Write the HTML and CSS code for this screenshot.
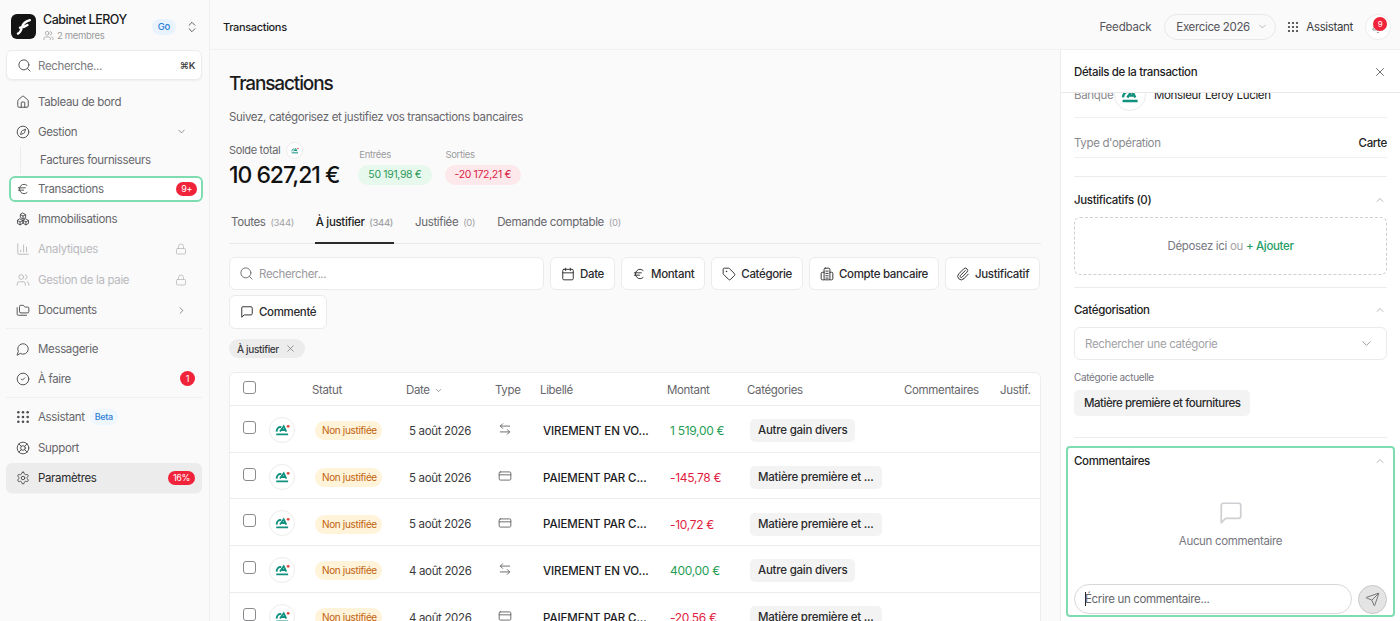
FILE: index.html
```html
<!DOCTYPE html>
<html lang="fr">
<head>
  <meta charset="UTF-8">
  <meta name="viewport" content="width=device-width, initial-scale=1.0">
  <title>Transactions</title>
  <link rel="stylesheet" href="styles.css">
</head>
<body>
  <svg class="sprite" aria-hidden="true">
    <symbol id="i-search" viewBox="0 0 24 24"><circle cx="11" cy="11" r="8"/><path d="m21 21-4.3-4.3"/></symbol>
    <symbol id="i-home" viewBox="0 0 24 24"><path d="M15 21v-8a1 1 0 0 0-1-1h-4a1 1 0 0 0-1 1v8"/><path d="M3 10a2 2 0 0 1 .709-1.528l7-5.999a2 2 0 0 1 2.582 0l7 5.999A2 2 0 0 1 21 10v9a2 2 0 0 1-2 2H5a2 2 0 0 1-2-2z"/></symbol>
    <symbol id="i-compass" viewBox="0 0 24 24"><circle cx="12" cy="12" r="10"/><path d="m16.24 7.76-1.804 5.411a2 2 0 0 1-1.265 1.265L7.76 16.24l1.804-5.411a2 2 0 0 1 1.265-1.265z"/></symbol>
    <symbol id="i-euro" viewBox="0 0 24 24"><path d="M4 10h12"/><path d="M4 14h9"/><path d="M19 6a7.7 7.7 0 0 0-5.2-2A7.9 7.9 0 0 0 6 12c0 4.4 3.5 8 7.8 8 2 0 3.8-.8 5.2-2"/></symbol>
    <symbol id="i-boxes" viewBox="0 0 24 24"><path d="m12 2 4.5 2.5v5L12 12 7.500 9.500v-5z"/><path d="m7 12 4.500 2.500v5L7 22l-4.500-2.500v-5z"/><path d="m17 12 4.500 2.500v5L17 22l-4.500-2.500v-5z"/><path d="M7.500 4.500 12 7l4.500-2.500M12 7v5M2.500 14.500 7 17l4.500-2.500M7 17v5M12.500 14.500 17 17l4.500-2.500M17 17v5"/></symbol>
    <symbol id="i-chart" viewBox="0 0 24 24"><path d="M3 3v16a2 2 0 0 0 2 2h16"/><path d="M8 17v-3"/><path d="M13 17V5"/><path d="M18 17V9"/></symbol>
    <symbol id="i-lock" viewBox="0 0 24 24"><rect x="3" y="11" width="18" height="11" rx="2"/><path d="M7 11V7a5 5 0 0 1 10 0v4"/></symbol>
    <symbol id="i-users" viewBox="0 0 24 24"><path d="M16 21v-2a4 4 0 0 0-4-4H6a4 4 0 0 0-4 4v2"/><circle cx="9" cy="7" r="4"/><path d="M22 21v-2a4 4 0 0 0-3-3.870"/><path d="M16 3.130a4 4 0 0 1 0 7.750"/></symbol>
    <symbol id="i-folders" viewBox="0 0 24 24"><path d="M20 17a2 2 0 0 0 2-2V9a2 2 0 0 0-2-2h-3.900a2 2 0 0 1-1.690-.9l-.81-1.200a2 2 0 0 0-1.670-.9H8a2 2 0 0 0-2 2v9a2 2 0 0 0 2 2Z"/><path d="M2 8v11a2 2 0 0 0 2 2h14"/></symbol>
    <symbol id="i-chat" viewBox="0 0 24 24"><path d="M7.900 20A9 9 0 1 0 4 16.100L2 22Z"/></symbol>
    <symbol id="i-check" viewBox="0 0 24 24"><circle cx="12" cy="12" r="10"/><path d="m9 12 2 2 4-4"/></symbol>
    <symbol id="i-buoy" viewBox="0 0 24 24"><circle cx="12" cy="12" r="10"/><path d="m4.930 4.930 4.240 4.240"/><path d="m14.830 9.170 4.240-4.240"/><path d="m14.830 14.830 4.240 4.240"/><path d="m9.170 14.830-4.240 4.240"/><circle cx="12" cy="12" r="4"/></symbol>
    <symbol id="i-gear" viewBox="0 0 24 24"><path d="M12.220 2h-.44a2 2 0 0 0-2 2v.18a2 2 0 0 1-1 1.730l-.43.25a2 2 0 0 1-2 0l-.15-.08a2 2 0 0 0-2.730.73l-.22.38a2 2 0 0 0 .73 2.730l.15.1a2 2 0 0 1 1 1.720v.51a2 2 0 0 1-1 1.740l-.15.09a2 2 0 0 0-.73 2.730l.22.38a2 2 0 0 0 2.730.73l.15-.08a2 2 0 0 1 2 0l.43.25a2 2 0 0 1 1 1.730V20a2 2 0 0 0 2 2h.44a2 2 0 0 0 2-2v-.18a2 2 0 0 1 1-1.730l.43-.25a2 2 0 0 1 2 0l.15.08a2 2 0 0 0 2.730-.73l.22-.39a2 2 0 0 0-.73-2.730l-.15-.08a2 2 0 0 1-1-1.740v-.5a2 2 0 0 1 1-1.740l.15-.09a2 2 0 0 0 .73-2.730l-.22-.38a2 2 0 0 0-2.730-.73l-.15.08a2 2 0 0 1-2 0l-.43-.25a2 2 0 0 1-1-1.730V4a2 2 0 0 0-2-2z"/><circle cx="12" cy="12" r="3"/></symbol>
    <symbol id="i-updown" viewBox="0 0 24 24"><path d="m7 15 5 5 5-5"/><path d="m7 9 5-5 5 5"/></symbol>
    <symbol id="i-down" viewBox="0 0 24 24"><path d="m6 9 6 6 6-6"/></symbol>
    <symbol id="i-up" viewBox="0 0 24 24"><path d="m18 15-6-6-6 6"/></symbol>
    <symbol id="i-right" viewBox="0 0 24 24"><path d="m9 18 6-6-6-6"/></symbol>
    <symbol id="i-calendar" viewBox="0 0 24 24"><path d="M8 2v4"/><path d="M16 2v4"/><rect x="3" y="4" width="18" height="18" rx="2"/><path d="M3 10h18"/></symbol>
    <symbol id="i-tag" viewBox="0 0 24 24"><path d="M12.586 2.586A2 2 0 0 0 11.172 2H4a2 2 0 0 0-2 2v7.172a2 2 0 0 0 .586 1.414l8.704 8.704a2.426 2.426 0 0 0 3.420 0l6.580-6.580a2.426 2.426 0 0 0 0-3.420z"/><circle cx="7.500" cy="7.500" r=".5"/></symbol>
    <symbol id="i-bank" viewBox="0 0 24 24"><rect x="7" y="2" width="10" height="20" rx="2"/><path d="M7 9H4a2 2 0 0 0-2 2v9a2 2 0 0 0 2 2h3"/><path d="M17 9h3a2 2 0 0 1 2 2v9a2 2 0 0 1-2 2h-3"/><path d="M10 7h4M10 11h4M10 15h4M10 19h4"/></symbol>
    <symbol id="i-clip" viewBox="0 0 24 24"><path d="M13.234 20.252 21 12.300"/><path d="m16 6-8.414 8.586a2 2 0 0 0 0 2.828 2 2 0 0 0 2.828 0l8.414-8.586a4 4 0 0 0 0-5.656 4 4 0 0 0-5.656 0l-8.415 8.585a6 6 0 1 0 8.486 8.486"/></symbol>
    <symbol id="i-comment" viewBox="0 0 24 24"><path d="M21 15a2 2 0 0 1-2 2H7l-4 4V5a2 2 0 0 1 2-2h14a2 2 0 0 1 2 2z"/></symbol>
    <symbol id="i-swap" viewBox="0 0 24 24"><path d="M8 3 4 7l4 4"/><path d="M4 7h16"/><path d="m16 21 4-4-4-4"/><path d="M20 17H4"/></symbol>
    <symbol id="i-card" viewBox="0 0 24 24"><rect x="2" y="5" width="20" height="14" rx="2"/><path d="M2 10h20"/></symbol>
    <symbol id="i-send" viewBox="0 0 24 24"><path d="M14.536 21.686a.5.5 0 0 0 .937-.024l6.500-19a.496.496 0 0 0-.635-.635l-19 6.500a.5.5 0 0 0-.024.937l7.930 3.180a2 2 0 0 1 1.112 1.110z"/><path d="m21.854 2.147-10.940 10.939"/></symbol>
    <symbol id="i-bell" viewBox="0 0 24 24"><path d="M10.268 21a2 2 0 0 0 3.464 0"/><path d="M3.262 15.326A1 1 0 0 0 4 17h16a1 1 0 0 0 .74-1.673C19.410 13.956 18 12.499 18 8A6 6 0 0 0 6 8c0 4.499-1.411 5.956-2.738 7.326"/></symbol>
    <symbol id="i-close" viewBox="0 0 24 24"><path d="M18 6 6 18"/><path d="m6 6 12 12"/></symbol>
    <symbol id="i-dots" viewBox="0 0 24 24"><g class="dots"><circle cx="4" cy="4" r="2.200"/><circle cx="12" cy="4" r="2.200"/><circle cx="20" cy="4" r="2.200"/><circle cx="4" cy="12" r="2.200"/><circle cx="12" cy="12" r="2.200"/><circle cx="20" cy="12" r="2.200"/><circle cx="4" cy="20" r="2.200"/><circle cx="12" cy="20" r="2.200"/><circle cx="20" cy="20" r="2.200"/></g></symbol>
    <symbol id="i-bank-logo" viewBox="0 0 24 18"><path class="bank-logo__green" d="M2 16h19M10 4.500C6 3.500 3 6 2.500 11.500M8 11.500 14 3l4 8.500M10.500 9h6"/><circle class="bank-logo__red" cx="21" cy="3" r="2.200"/></symbol>
  </svg>

  <aside class="sidebar">
    <div class="org">
      <span class="org__logo">
        <svg viewBox="0 0 24 24"><path d="M5 21c3-1 4-4 5-8s3-7 10-9M7.500 13.500c3.500-.4 6.500-1.400 9.500-3.500"/></svg>
      </span>
      <div class="org__text">
        <div class="org__name">Cabinet LEROY</div>
        <div class="org__members"><svg class="icon icon--xs"><use href="#i-users"/></svg>2 membres</div>
      </div>
      <span class="pill-blue">Go</span>
      <svg class="icon org__switch"><use href="#i-updown"/></svg>
    </div>

    <div class="side-search">
      <svg class="icon icon--md"><use href="#i-search"/></svg>
      <span class="side-search__text">Recherche...</span>
      <span class="side-search__kbd">⌘K</span>
    </div>

    <nav class="nav">
      <a class="nav-item"><svg class="icon"><use href="#i-home"/></svg>Tableau de bord</a>
      <a class="nav-item"><svg class="icon"><use href="#i-compass"/></svg>Gestion<svg class="icon icon--xs nav-item__end"><use href="#i-down"/></svg></a>
      <a class="nav-sub">Factures fournisseurs</a>
      <a class="nav-item nav-item--tour"><svg class="icon"><use href="#i-euro"/></svg>Transactions<span class="count">9+</span></a>
      <a class="nav-item"><svg class="icon"><use href="#i-boxes"/></svg>Immobilisations</a>
      <a class="nav-item nav-item--locked"><svg class="icon"><use href="#i-chart"/></svg>Analytiques<svg class="icon icon--sm nav-item__end"><use href="#i-lock"/></svg></a>
      <a class="nav-item nav-item--locked"><svg class="icon"><use href="#i-users"/></svg>Gestion de la paie<svg class="icon icon--sm nav-item__end"><use href="#i-lock"/></svg></a>
      <a class="nav-item"><svg class="icon"><use href="#i-folders"/></svg>Documents<svg class="icon icon--xs nav-item__end"><use href="#i-right"/></svg></a>
      <hr class="nav-line">
      <a class="nav-item"><svg class="icon"><use href="#i-chat"/></svg>Messagerie</a>
      <a class="nav-item"><svg class="icon"><use href="#i-check"/></svg>À faire<span class="count count--round">1</span></a>
      <hr class="nav-line">
      <a class="nav-item"><svg class="icon icon--dots"><use href="#i-dots"/></svg>Assistant<span class="pill-blue pill-blue--small">Beta</span></a>
      <a class="nav-item"><svg class="icon"><use href="#i-buoy"/></svg>Support</a>
      <a class="nav-item nav-item--active"><svg class="icon"><use href="#i-gear"/></svg>Paramètres<span class="count">16%</span></a>
    </nav>
  </aside>

  <div class="shell">
    <header class="topbar">
      <div class="topbar__title">Transactions</div>
      <span class="topbar__link">Feedback</span>
      <span class="year">Exercice 2026<svg class="icon icon--xs"><use href="#i-down"/></svg></span>
      <span class="topbar__assistant"><svg class="icon icon--dots"><use href="#i-dots"/></svg>Assistant</span>
      <span class="bell"><svg class="icon"><use href="#i-bell"/></svg><span class="bell__badge">9</span></span>
    </header>

    <div class="content">
      <main class="main">
        <h1 class="main__title">Transactions</h1>
        <p class="main__sub">Suivez, catégorisez et justifiez vos transactions bancaires</p>

        <div class="stats">
          <div class="stats__total">
            <div class="stats__label">Solde total <span class="bank bank--tiny"><svg><use href="#i-bank-logo"/></svg></span></div>
            <div class="stats__amount">10 627,21 €</div>
          </div>
          <div class="stats__flow">
            <div class="stats__small">Entrées</div>
            <span class="flow flow--in">50 191,98 €</span>
          </div>
          <div class="stats__flow">
            <div class="stats__small">Sorties</div>
            <span class="flow flow--out">-20 172,21 €</span>
          </div>
        </div>

        <div class="tabs">
          <span class="tab">Toutes <small>(344)</small></span>
          <span class="tab tab--active">À justifier <small>(344)</small></span>
          <span class="tab">Justifiée <small>(0)</small></span>
          <span class="tab">Demande comptable <small>(0)</small></span>
        </div>

        <div class="filters">
          <div class="filters__search"><svg class="icon icon--md"><use href="#i-search"/></svg>Rechercher...</div>
          <button class="filter"><svg class="icon"><use href="#i-calendar"/></svg>Date</button>
          <button class="filter"><svg class="icon"><use href="#i-euro"/></svg>Montant</button>
          <button class="filter"><svg class="icon"><use href="#i-tag"/></svg>Catégorie</button>
          <button class="filter"><svg class="icon"><use href="#i-bank"/></svg>Compte bancaire</button>
          <button class="filter"><svg class="icon"><use href="#i-clip"/></svg>Justificatif</button>
          <button class="filter filter--tall"><svg class="icon"><use href="#i-comment"/></svg>Commenté</button>
        </div>

        <span class="active-filter">À justifier<svg class="icon icon--xs"><use href="#i-close"/></svg></span>

        <div class="table">
          <div class="table__head table__grid">
            <span class="check"></span>
            <span>Statut</span>
            <span>Date<svg class="icon icon--xxs"><use href="#i-down"/></svg></span>
            <span>Type</span>
            <span>Libellé</span>
            <span>Montant</span>
            <span>Catégories</span>
            <span>Commentaires</span>
            <span>Justif.</span>
          </div>

          <div class="table__row table__grid">
            <span class="table__lead"><span class="check"></span><span class="bank"><svg><use href="#i-bank-logo"/></svg></span></span>
            <span class="cell"><span class="status">Non justifiée</span></span>
            <span class="cell">5 août 2026</span>
            <span class="cell cell--type"><svg class="icon"><use href="#i-swap"/></svg></span>
            <span class="cell cell--label">VIREMENT EN VO...</span>
            <span class="cell amount amount--in">1 519,00 €</span>
            <span class="cell cell--span"><span class="cat">Autre gain divers</span></span>
          </div>
          <div class="table__row table__grid">
            <span class="table__lead"><span class="check"></span><span class="bank"><svg><use href="#i-bank-logo"/></svg></span></span>
            <span class="cell"><span class="status">Non justifiée</span></span>
            <span class="cell">5 août 2026</span>
            <span class="cell cell--type"><svg class="icon"><use href="#i-card"/></svg></span>
            <span class="cell cell--label">PAIEMENT PAR C...</span>
            <span class="cell amount amount--out">-145,78 €</span>
            <span class="cell cell--span"><span class="cat">Matière première et ...</span></span>
          </div>
          <div class="table__row table__grid">
            <span class="table__lead"><span class="check"></span><span class="bank"><svg><use href="#i-bank-logo"/></svg></span></span>
            <span class="cell"><span class="status">Non justifiée</span></span>
            <span class="cell">5 août 2026</span>
            <span class="cell cell--type"><svg class="icon"><use href="#i-card"/></svg></span>
            <span class="cell cell--label">PAIEMENT PAR C...</span>
            <span class="cell amount amount--out">-10,72 €</span>
            <span class="cell cell--span"><span class="cat">Matière première et ...</span></span>
          </div>
          <div class="table__row table__grid">
            <span class="table__lead"><span class="check"></span><span class="bank"><svg><use href="#i-bank-logo"/></svg></span></span>
            <span class="cell"><span class="status">Non justifiée</span></span>
            <span class="cell">4 août 2026</span>
            <span class="cell cell--type"><svg class="icon"><use href="#i-swap"/></svg></span>
            <span class="cell cell--label">VIREMENT EN VO...</span>
            <span class="cell amount amount--in">400,00 €</span>
            <span class="cell cell--span"><span class="cat">Autre gain divers</span></span>
          </div>
          <div class="table__row table__grid">
            <span class="table__lead"><span class="check"></span><span class="bank"><svg><use href="#i-bank-logo"/></svg></span></span>
            <span class="cell"><span class="status">Non justifiée</span></span>
            <span class="cell">4 août 2026</span>
            <span class="cell cell--type"><svg class="icon"><use href="#i-card"/></svg></span>
            <span class="cell cell--label">PAIEMENT PAR C...</span>
            <span class="cell amount amount--out">-20,56 €</span>
            <span class="cell cell--span"><span class="cat">Matière première et ...</span></span>
          </div>
        </div>
      </main>

      <aside class="details">
        <div class="details__head">
          <span>Détails de la transaction</span>
          <svg class="icon"><use href="#i-close"/></svg>
        </div>

        <div class="details__body">
          <div class="bank-row">
            <span class="bank-row__label">Banque</span>
            <span class="bank bank--large"><svg><use href="#i-bank-logo"/></svg></span>
            <span class="bank-row__name">Monsieur Leroy Lucien</span>
          </div>
          <div class="type-row">
            <span class="type-row__label">Type d'opération</span>
            <span class="type-row__value">Carte</span>
          </div>

          <section class="section section--docs">
            <div class="section__head">Justificatifs (0)<svg class="icon icon--sm"><use href="#i-up"/></svg></div>
            <div class="dropzone">Déposez ici <em>ou</em> <b>+ Ajouter</b></div>
          </section>

          <section class="section section--cats">
            <div class="section__head">Catégorisation<svg class="icon icon--sm"><use href="#i-up"/></svg></div>
            <div class="select">Rechercher une catégorie<svg class="icon icon--md"><use href="#i-down"/></svg></div>
            <div class="section__hint">Catégorie actuelle</div>
            <span class="cat cat--large">Matière première et fournitures</span>
          </section>

          <section class="comments">
            <div class="section__head">Commentaires<svg class="icon icon--sm"><use href="#i-up"/></svg></div>
            <div class="comments__empty">
              <svg class="icon comments__icon"><use href="#i-comment"/></svg>
              <span>Aucun commentaire</span>
            </div>
            <div class="comments__form">
              <div class="comments__input"><i class="caret"></i>Écrire un commentaire...</div>
              <button class="comments__send"><svg class="icon icon--md"><use href="#i-send"/></svg></button>
            </div>
          </section>
        </div>
      </aside>
    </div>
  </div>
</body>
</html>
```

FILE: styles.css
```css
/* General styles */
* {
  box-sizing: border-box;
}

html,
body {
  height: 621px;
  margin: 0;
  overflow: hidden;
}

body {
  display: flex;
  background: #fafafa;
  color: #1c1c1e;
  font-family: Inter, "Liberation Sans", sans-serif;
  font-size: 11.5px;
  letter-spacing: -0.03em;
}

.sprite {
  display: none;
}

.icon {
  width: 14px;
  height: 14px;
  flex: none;
  fill: none;
  stroke: currentColor;
  stroke-width: 1.6;
  stroke-linecap: round;
  stroke-linejoin: round;
}

.icon--xxs { width: 9px; height: 9px; }
.icon--xs { width: 11px; height: 11px; }
.icon--sm { width: 12px; height: 12px; }
.icon--md { width: 15px; height: 15px; }

.icon--dots {
  fill: currentColor;
  stroke: none;
}

.dots {
  fill: currentColor;
  stroke: none;
}

/* Sidebar */
.sidebar {
  width: 210px;
  flex: none;
  padding: 0 7px 0 6px;
  border-right: 1px solid #f1f1f1;
}

.org {
  display: flex;
  align-items: center;
  height: 50px;
  padding: 3px 3px 0 5px;
}

.org__logo {
  display: flex;
  width: 25px;
  height: 25px;
  border-radius: 6px;
  background: #141414;
  padding: 3px;
}

.org__logo svg {
  fill: none;
  stroke: #fff;
  stroke-width: 3;
  stroke-linecap: round;
}

.org__text {
  flex: 1;
  margin-left: 7px;
}

.org__name {
  font-size: 12.5px;
  font-weight: 500;
  line-height: 15px;
  letter-spacing: -0.04em;
}

.org__members {
  display: flex;
  align-items: center;
  gap: 3px;
  color: #9a9a9e;
  font-size: 9.5px;
  line-height: 13px;
  margin-top: 2px;
}

.org__switch {
  margin-left: 9px;
  color: #55555a;
}

.pill-blue {
  padding: 2px 6px;
  border-radius: 9px;
  background: #e9f3fe;
  color: #2f7fd6;
  font-size: 9.5px;
  font-weight: 500;
  line-height: 12px;
}

.pill-blue--small {
  margin-left: -3px;
  padding: 2px 5px;
  background: #eef6fe;
  font-size: 9px;
}

.side-search {
  display: flex;
  align-items: center;
  height: 30px;
  padding: 1px 6px 0 10px;
  margin-bottom: 6.4px;
  border: 1px solid #ebebeb;
  border-radius: 6px;
  background: #fff;
  box-shadow: 0 1px 2px rgba(0,0,0,.05);
  color: #55555a;
}

.side-search__text {
  flex: 1;
  margin-left: 6px;
  color: #7b7b80;
}

.side-search__kbd {
  color: #444;
  font-size: 9.5px;
  font-weight: 600;
}

.nav {
  display: flex;
  flex-direction: column;
}

.nav-item {
  display: flex;
  align-items: center;
  gap: 8px;
  height: 30.4px;
  padding: 0 7px 0 10px;
  border-radius: 6px;
  color: #66666b;
  flex: none;
}

.nav-item > .icon:first-child {
  color: #4b4b50;
}

.nav-item__end {
  margin-left: auto;
  margin-right: 8px;
}

.nav-item--tour {
  height: 26px;
  margin: 2px -1px 2px 3px;
  padding-left: 5px;
  border: 2px solid #7fdcb0;
  padding-right: 4px;
  background: #fff;
}

.nav-item--locked,
.nav-item--locked > .icon:first-child {
  color: #b9b9bd;
}

.nav-item--active {
  height: 30px;
  background: #ececec;
  color: #2a2a2d;
  box-shadow: 0 1px 1px rgba(0,0,0,.03);
}

.nav-sub {
  height: 26.6px;
  line-height: 26px;
  margin-left: 14px;
  padding-left: 19px;
  border-left: 1px solid #ececec;
  color: #66666b;
}

.nav-line {
  width: 100%;
  margin: 3px 0 4px;
  border: 0;
  border-top: 1px solid #f0f0f0;
}

.count {
  margin-left: auto;
  padding: 0 5px;
  height: 14px;
  border-radius: 8px;
  background: #f0233b;
  color: #fff;
  font-size: 9px;
  line-height: 14px;
}

.count--round {
  width: 15px;
  height: 15px;
  padding: 0;
  border-radius: 50%;
  text-align: center;
  line-height: 15px;
}

/* Top bar */
.shell {
  display: flex;
  flex-direction: column;
  flex: 1;
  min-width: 0;
}

.topbar {
  display: flex;
  align-items: center;
  height: 50px;
  flex: none;
  padding: 4px 9px 0 13px;
  border-bottom: 1px solid #f1f1f1;
}

.topbar__title {
  flex: 1;
  font-size: 11px;
  font-weight: 500;
}

.topbar__link {
  color: #55555a;
  letter-spacing: -0.015em;
}

.year {
  display: flex;
  align-items: center;
  gap: 7px;
  width: 112px;
  height: 26px;
  margin-left: 13px;
  padding: 0 10px 0 11px;
  border: 1px solid #e8e8e8;
  border-radius: 13px;
  color: #55555a;
  white-space: nowrap;
}

.year .icon {
  color: #a2a2a6;
}

.topbar__assistant {
  display: flex;
  align-items: center;
  gap: 7px;
  margin-left: 11px;
  color: #3a3a3d;
}

.topbar__assistant .icon {
  width: 12px;
  height: 12px;
}

.bell {
  position: relative;
  display: flex;
  align-items: center;
  justify-content: center;
  width: 26px;
  height: 26px;
  margin-left: 12px;
  border: 1px solid #ececec;
  border-radius: 50%;
  background: #fff;
  color: #888;
}

.bell__badge {
  position: absolute;
  top: 2px;
  right: 3px;
  width: 14px;
  height: 14px;
  border-radius: 50%;
  background: #f0233b;
  color: #fff;
  font-size: 8px;
  line-height: 14px;
  text-align: center;
}

/* Main column */
.content {
  display: flex;
  flex: 1;
  min-height: 0;
}

.main {
  width: 851px;
  flex: none;
  padding: 21px 19px 0;
  overflow: hidden;
  border-right: 1px solid #ececec;
}

.main__title {
  margin: 0;
  font-size: 19px;
  font-weight: 500;
  line-height: 26px;
  letter-spacing: -0.06em;
}

.main__sub {
  margin: 13px 0 0;
  color: #66666b;
  line-height: 15px;
}

.stats {
  display: flex;
  align-items: flex-end;
  gap: 19px;
  margin-top: 17px;
}

.stats__label {
  display: flex;
  align-items: center;
  gap: 6px;
  height: 16px;
  color: #66666b;
  font-size: 11px;
}

.stats__amount {
  margin-top: 2px;
  font-size: 23px;
  font-weight: 500;
  line-height: 30px;
  color: #111;
  letter-spacing: -0.045em;
}

.stats__total {
  margin-bottom: -1px;
}

.stats__flow {
  margin-right: -6px;
  margin-bottom: 4px;
}

.stats__small {
  margin-bottom: 5px;
  padding-left: 1px;
  color: #9a9a9e;
  font-size: 9.5px;
}

.flow {
  display: block;
  height: 20px;
  padding: 0 10px;
  border-radius: 10px;
  font-size: 10.5px;
  line-height: 20px;
}

.flow--in {
  background: #e7f8ec;
  color: #2f9a5c;
}

.flow--out {
  background: #fde9ec;
  color: #d81e42;
}

.tabs {
  display: flex;
  gap: 22px;
  height: 37px;
  margin-top: 18px;
  padding-left: 2px;
  border-bottom: 1px solid #e9e9e9;
}

.tab {
  padding-top: 8px;
  color: #66666b;
  white-space: nowrap;
}

.tab small {
  margin-left: 2px;
  color: #a2a2a6;
  font-size: 9.5px;
}

.tab--active {
  height: 37px;
  margin: 0 -1px;
  padding-left: 1px;
  padding-right: 1px;
  border-bottom: 2px solid #2a2a2d;
  color: #222;
  font-weight: 500;
}

.filters {
  display: flex;
  flex-wrap: wrap;
  gap: 5px 6px;
  margin-top: 13px;
}

.filters__search {
  display: flex;
  align-items: center;
  gap: 5px;
  width: 315px;
  height: 33px;
  padding: 0 9px;
  border: 1px solid #ebebeb;
  border-radius: 6px;
  background: #fff;
  color: #9a9a9e;
}

.filters__search .icon {
  color: #77777b;
}

.filter {
  display: flex;
  align-items: center;
  gap: 5px;
  height: 33px;
  padding: 0 10px;
  border: 1px solid #ebebeb;
  border-radius: 6px;
  background: #fff;
  color: #2a2a2d;
  font: inherit;
  font-weight: 500;
  letter-spacing: -0.03em;
}

.filter--tall {
  height: 34px;
}

.active-filter {
  display: inline-flex;
  align-items: center;
  gap: 6px;
  height: 19px;
  margin-top: 10px;
  padding: 0 9px 0 8px;
  border-radius: 10px;
  background: #ececec;
  color: #3a3a3d;
  font-size: 10px;
  font-weight: 500;
}

.active-filter .icon {
  color: #77777b;
}

/* Table */
.table {
  margin-top: 14px;
  border: 1px solid #ededed;
  border-radius: 6px;
  background: #fff;
}

.table__grid {
  display: grid;
  grid-template-columns: 82px 94px 89px 45px 127px 80px 157px 96px 41px;
  align-items: center;
}

.table__head {
  height: 33px;
  padding-top: 2px;
  border-bottom: 1px solid #ededed;
  color: #66666b;
}

.table__head span {
  display: flex;
  align-items: center;
  gap: 4px;
  white-space: nowrap;
}

.table__head > span:first-child {
  margin-left: 13px;
}

.table__row {
  height: 46.700px;
  border-bottom: 1px solid #ededed;
  color: #3a3a3d;
}

.table__lead {
  display: flex;
  align-items: center;
  gap: 13px;
  padding-top: 2px;
  padding-left: 13px;
}

.check {
  width: 13px;
  height: 13px;
  flex: none;
  margin-top: -5px;
  border: 1px solid #8a8a8e;
  border-radius: 3px;
  background: #fff;
}

.bank {
  display: inline-flex;
  align-items: center;
  justify-content: center;
  width: 26px;
  height: 26px;
  flex: none;
  border: 1px solid #ececec;
  border-radius: 50%;
  background: #fff;
}

.bank svg {
  width: 15px;
  height: 12px;
  fill: none;
  stroke-width: 3;
}

.bank-logo__green {
  stroke: #12917f;
  fill: none;
}

.bank-logo__red {
  fill: #e2453b;
  stroke: none;
}

.bank--tiny {
  width: 17px;
  height: 17px;
}

.bank--tiny svg {
  width: 8px;
  height: 7px;
}

.bank--large {
  width: 32px;
  height: 32px;
}

.bank--large svg {
  width: 19px;
  height: 15px;
}

.cell {
  padding-top: 4px;
  padding-left: 3px;
  white-space: nowrap;
}

.cell--span {
  grid-column: span 3;
}

.cell--type {
  color: #66666b;
}

.cell--label {
  color: #1c1c1e;
  font-weight: 500;
  letter-spacing: -0.01em;
}

.amount {
  font-size: 12px;
  letter-spacing: -0.025em;
}

.status {
  display: inline-block;
  height: 19px;
  padding: 0 5px 0 7px;
  border-radius: 10px;
  background: #fff3d9;
  color: #c2620e;
  font-size: 10px;
  line-height: 19px;
}

.amount--in {
  color: #1f9d55;
}

.amount--out {
  color: #e11d3f;
}

.cat {
  display: inline-block;
  height: 23px;
  padding: 0 8px;
  border-radius: 5px;
  background: #f3f3f3;
  color: #2a2a2d;
  font-weight: 500;
  line-height: 23px;
  letter-spacing: -0.02em;
}

.cat--large {
  display: block;
  width: max-content;
  height: 26px;
  padding: 0 10px;
  line-height: 26px;
  letter-spacing: -0.04em;
}

/* Details panel */
.details {
  display: flex;
  flex-direction: column;
  flex: 1;
  min-width: 0;
  background: #fff;
}

.details__head {
  display: flex;
  align-items: center;
  justify-content: space-between;
  height: 43px;
  flex: none;
  padding: 2px 13px 0 13px;
  border-bottom: 1px solid #e9e9e9;
  font-weight: 500;
}

.details__head .icon {
  color: #66666b;
}

.details__body {
  flex: 1;
  overflow: hidden;
  padding: 0 13px 0 13px;
}

.bank-row {
  display: flex;
  align-items: center;
  height: 32px;
  margin-top: -14px;
  margin-bottom: 6px;
  color: #222;
}

.bank-row__label {
  width: 40px;
  color: #8a8a8e;
}

.bank-row__name {
  margin-left: 8px;
}

.type-row {
  display: flex;
  justify-content: space-between;
  height: 41px;
  padding-top: 18px;
  border-top: 1px solid #f0f0f0;
  border-bottom: 1px solid #f0f0f0;
}

.type-row__label {
  color: #8a8a8e;
}

.type-row__value {
  color: #222;
  font-weight: 500;
}

.section {
  border-top: 1px solid #ededed;
}

.section--docs {
  height: 111px;
  margin-top: 18px;
  padding-top: 16px;
}

.section--cats {
  height: 151px;
  padding-top: 15px;
  border-bottom: 1px solid #ededed;
}

.section__head {
  display: flex;
  align-items: center;
  justify-content: space-between;
  height: 14px;
  color: #222;
  font-weight: 500;
}

.section__head .icon {
  margin-right: 1px;
  color: #a2a2a6;
}

.dropzone {
  display: flex;
  align-items: center;
  justify-content: center;
  gap: 3px;
  height: 58px;
  margin-top: 10px;
  border: 1.5px dashed #cfcfd3;
  border-radius: 6px;
  color: #77777f;
}

.dropzone em {
  color: #a2a2a6;
  font-style: normal;
}

.dropzone b {
  color: #1f9d65;
  font-weight: 500;
}

.select {
  display: flex;
  align-items: center;
  justify-content: space-between;
  height: 33px;
  margin-top: 10px;
  padding: 0 12px 0 10px;
  border: 1px solid #ebebeb;
  border-radius: 6px;
  color: #a2a2a6;
}

.section__hint {
  margin: 11px 0 6px;
  color: #77777f;
  font-size: 10px;
  line-height: 13px;
}

/* Highlighted comment box */
.comments {
  display: flex;
  flex-direction: column;
  height: 171px;
  margin: 8px -8px 0;
  padding: 6px 6px 1px 6px;
  border: 2px solid #7fdcb0;
  border-radius: 4px;
}

.comments__empty {
  display: flex;
  flex-direction: column;
  align-items: center;
  flex: 1;
  gap: 8px;
  padding-top: 32px;
  color: #77777f;
}

.comments__icon {
  width: 26px;
  height: 26px;
  color: #cfcfd3;
}

.comments__form {
  display: flex;
  align-items: center;
  gap: 6px;
}

.comments__input {
  display: flex;
  align-items: center;
  flex: 1;
  height: 30px;
  padding-left: 10px;
  border: 1px solid #d8d8dc;
  border-radius: 15px;
  color: #66666b;
}

.caret {
  width: 1px;
  height: 14px;
  margin-right: -1px;
  background: #222;
}

.comments__send {
  display: flex;
  align-items: center;
  justify-content: center;
  width: 29px;
  height: 29px;
  padding: 0;
  border: 1px solid #c8c8cc;
  border-radius: 50%;
  background: #e4e4e4;
  color: #77777b;
}
```
